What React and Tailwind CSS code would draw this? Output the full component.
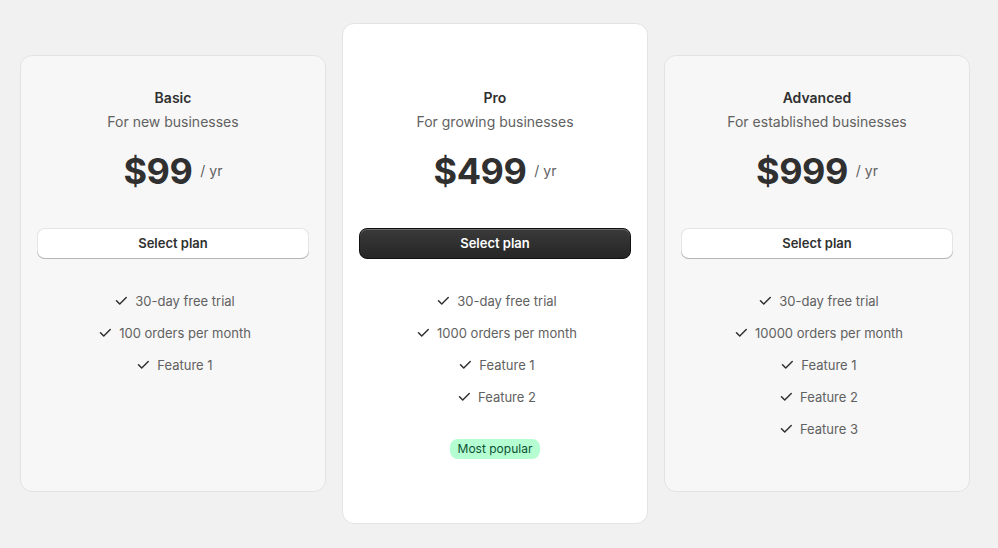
import React from 'react';

const plans = [
  {
    title: 'Basic',
    description: 'For new businesses',
    price: '$99',
    features: ['30-day free trial', '100 orders per month', 'Feature 1'],
  },
  {
    title: 'Pro',
    description: 'For growing businesses',
    price: '$499',
    features: ['30-day free trial', '1000 orders per month', 'Feature 1', 'Feature 2'],
    featured: true,
  },
  {
    title: 'Advanced',
    description: 'For established businesses',
    price: '$999',
    features: ['30-day free trial', '10000 orders per month', 'Feature 1', 'Feature 2', 'Feature 3'],
  },
];

const CheckIcon = () => (
  <svg viewBox="0 0 20 20" className="w-5 h-5 fill-[#303030] shrink-0">
    <path d="M15.78 5.97a.75.75 0 0 1 0 1.06l-6.5 6.5a.75.75 0 0 1-1.06 0l-3.25-3.25a.75.75 0 1 1 1.06-1.06l2.72 2.72 5.97-5.97a.75.75 0 0 1 1.06 0Z" />
  </svg>
);

const PlanCard = ({ plan }) => {
  const featured = plan.featured;
  return (
    <div
      className={
        featured
          ? 'w-[306px] h-[501px] bg-white border border-[#e3e3e3] rounded-xl px-4 pt-16 flex flex-col items-center'
          : 'w-[306px] h-[437px] bg-[#f7f7f7] border border-[#e3e3e3] rounded-xl px-4 pt-8 flex flex-col items-center'
      }
    >
      <div className="text-sm leading-5 font-semibold text-[#303030]">{plan.title}</div>
      <div className="mt-1 text-sm leading-5 text-[#616161]">{plan.description}</div>
      <div className="mt-[17px] flex items-center gap-2 h-11">
        <span className="text-[36px] leading-[44px] font-bold text-[#303030] tracking-[-0.5px]">{plan.price}</span>
        <span className="text-sm text-[#616161]">/ yr</span>
      </div>
      <button
        className={
          featured
            ? 'mt-[35px] w-full h-[31px] rounded-lg text-[13px] font-semibold text-white bg-gradient-to-b from-[#3a3a3a] to-[#262626] border border-[#111] shadow-[inset_0_1px_0_rgba(255,255,255,0.25)]'
            : 'mt-[35px] w-full h-[31px] rounded-lg text-[13px] font-semibold text-[#303030] bg-white shadow-[inset_0_-1px_0_#b5b5b5,inset_0_0_0_1px_rgba(0,0,0,0.1)]'
        }
      >
        Select plan
      </button>
      <ul className="mt-8 flex flex-col items-center gap-3">
        {plan.features.map((f) => (
          <li key={f} className="flex items-center gap-1 text-[13px] leading-5 text-[#616161]">
            <CheckIcon />
            <span>{f}</span>
          </li>
        ))}
      </ul>
      {featured && (
        <span className="mt-8 px-2 h-5 leading-5 rounded-lg bg-[#b4fed2] text-[#0c5132] text-[12px]">
          Most popular
        </span>
      )}
    </div>
  );
};

export default function App() {
  return (
    <div className="min-h-screen w-full bg-[#f1f1f1] font-['Inter',sans-serif] antialiased">
      <div className="flex items-center gap-4 pl-5 pt-[23px]">
        {plans.map((p) => (
          <PlanCard key={p.title} plan={p} />
        ))}
      </div>
    </div>
  );
}
